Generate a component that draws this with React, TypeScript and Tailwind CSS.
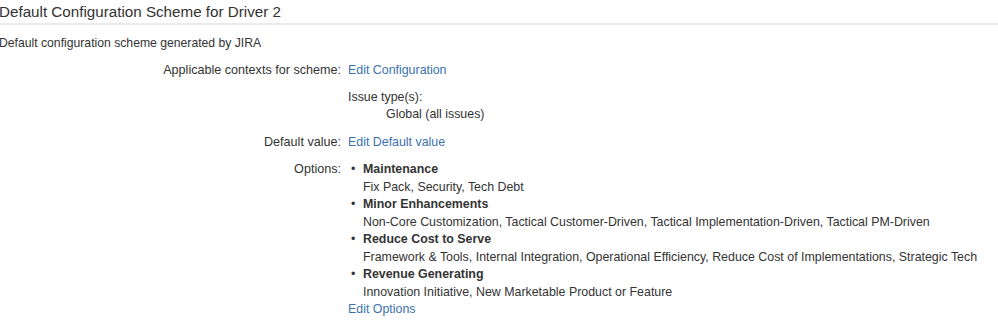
const options = [
  { name: 'Maintenance', values: 'Fix Pack, Security, Tech Debt' },
  {
    name: 'Minor Enhancements',
    values: 'Non-Core Customization, Tactical Customer-Driven, Tactical Implementation-Driven, Tactical PM-Driven',
  },
  {
    name: 'Reduce Cost to Serve',
    values:
      'Framework & Tools, Internal Integration, Operational Efficiency, Reduce Cost of Implementations, Strategic Tech',
  },
  { name: 'Revenue Generating', values: 'Innovation Initiative, New Marketable Product or Feature' },
];

function Row({ label, children, mb }: { label: string; children: React.ReactNode; mb: string }) {
  return (
    <div className={`grid grid-cols-[341px_1fr] gap-x-[7px] ${mb}`}>
      <div className="text-right leading-[18px] text-[12.6px]">{label}</div>
      <div className="leading-[18px]">{children}</div>
    </div>
  );
}

export default function App() {
  return (
    <div className="w-[998px] h-[322px] bg-white overflow-hidden text-[12.4px] text-[#333333] font-['Liberation_Sans',Arial,sans-serif]">
      <div className="ml-[-1px]">
        <h2 className="h-[25px] leading-[23px] text-[15.2px] font-normal border-b-2 border-[#ebebeb]">
          Default Configuration Scheme for Driver 2
        </h2>
        <p className="mt-[9px] mb-[9px] leading-[18px] text-[12.2px]">
          Default configuration scheme generated by JIRA
        </p>
      </div>

      <Row label="Applicable contexts for scheme:" mb="mb-[10px]">
        <a className="text-[#3b73af]">Edit Configuration</a>
      </Row>

      <div className="grid grid-cols-[341px_1fr] gap-x-[7px] mb-[9.5px]">
        <div />
        <div className="leading-[17px]">
          <div>Issue type(s):</div>
          <div className="pl-[38px]">Global (all issues)</div>
        </div>
      </div>

      <Row label="Default value:" mb="mb-[10.5px]">
        <a className="text-[#3b73af]">Edit Default value</a>
      </Row>

      <div className="grid grid-cols-[341px_1fr] gap-x-[7px]">
        <div className="text-right leading-[17.5px] text-[12.6px]">Options:</div>
        <div className="leading-[17.5px]">
          <ul>
            {options.map((o) => (
              <li key={o.name} className="flex">
                <span className="w-[15px] shrink-0 pl-[3px]">•</span>
                <div>
                  <div className="font-bold">{o.name}</div>
                  <div className="whitespace-nowrap">{o.values}</div>
                </div>
              </li>
            ))}
          </ul>
          <a className="text-[#3b73af]">Edit Options</a>
        </div>
      </div>
    </div>
  );
}
